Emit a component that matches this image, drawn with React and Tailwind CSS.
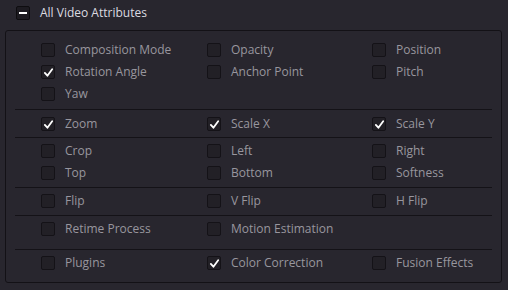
import React from "react";

const sections = [
  {
    pad: "pt-[8px] pb-[4px]",
    rows: [
      [["Composition Mode", false], ["Opacity", false], ["Position", false]],
      [["Rotation Angle", true], ["Anchor Point", false], ["Pitch", false]],
      [["Yaw", false]],
    ],
  },
  { pad: "pt-[3px] pb-[2px]", rows: [[["Zoom", true], ["Scale X", true], ["Scale Y", true]]] },
  {
    pad: "pt-[2px] pb-[3px]",
    rows: [
      [["Crop", false], ["Left", false], ["Right", false]],
      [["Top", false], ["Bottom", false], ["Softness", false]],
    ],
  },
  { pad: "pt-[2px] pb-[3px]", rows: [[["Flip", false], ["V Flip", false], ["H Flip", false]]] },
  { pad: "pt-[2px] pb-[9px]", rows: [[["Retime Process", false], ["Motion Estimation", false]]] },
  { pad: "pt-[2px] pb-[8px]", rows: [[["Plugins", false], ["Color Correction", true], ["Fusion Effects", false]]] },
];

function Check({ checked }) {
  return (
    <span className="w-[14px] h-[14px] rounded-[2px] border border-[#141217] bg-[#222026] flex items-center justify-center shrink-0">
      {checked && (
        <svg width="11" height="11" viewBox="0 0 12 12">
          <path d="M2 6.5 L4.8 9.5 L10 2.5" fill="none" stroke="#ffffff" strokeWidth="2" strokeLinecap="round" strokeLinejoin="round" />
        </svg>
      )}
    </span>
  );
}

export default function App() {
  return (
    <div className="w-[508px] h-[290px] bg-[#28262e] overflow-hidden" style={{ fontFamily: '"Open Sans", "Noto Sans", sans-serif' }}>
      <div className="flex items-center h-[30px] pl-[16px] pb-[4px]">
        <span className="w-[14px] h-[14px] rounded-[2px] border border-[#0e0d10] bg-[#1d1b21] flex items-center justify-center">
          <span className="w-[8px] h-[2px] bg-white" />
        </span>
        <span className="ml-[10px] text-[12px] text-[#dcdbe0]">All Video Attributes</span>
      </div>
      <div className="ml-[5px] w-[497px] border border-[#131116] rounded-[3px]">
        {sections.map((sec, i) => (
          <div key={i} className={i > 0 ? "border-t border-[#141217] mx-[9px]" : "mx-[9px]"}>
            <div className={`${sec.pad} pl-[26px]`}>
              {sec.rows.map((row, j) => (
                <div key={j} className="grid grid-cols-[166px_165px_140px] h-[22px] items-center">
                  {row.map(([label, checked]) => (
                    <div key={label} className="flex items-center gap-[10px]">
                      <Check checked={checked} />
                      <span className="text-[12px] text-[#98969e] whitespace-nowrap">{label}</span>
                    </div>
                  ))}
                </div>
              ))}
            </div>
          </div>
        ))}
      </div>
    </div>
  );
}
